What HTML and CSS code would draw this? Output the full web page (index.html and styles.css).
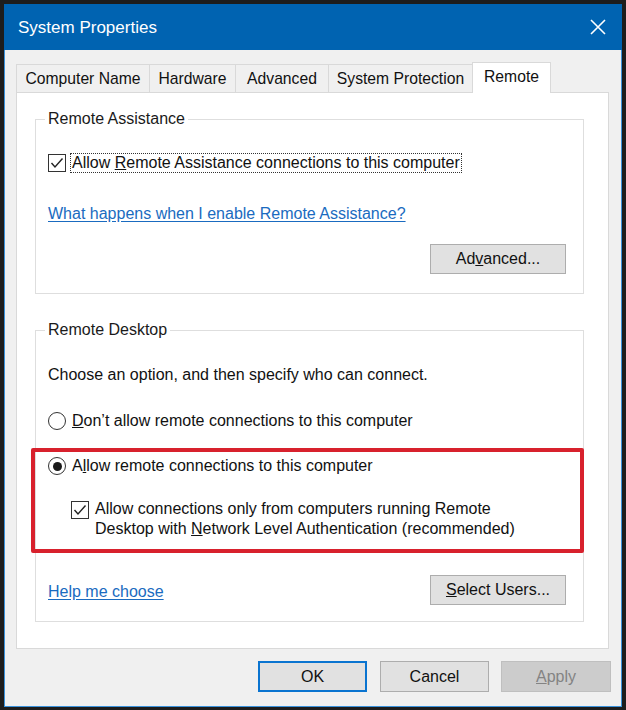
FILE: index.html
```html
<!DOCTYPE html>
<html>
<head>
<meta charset="utf-8">
<link rel="stylesheet" href="styles.css">
</head>
<body>
<div class="window">
  <div class="titlebar">
    <span class="title">System Properties</span>
    <svg class="close" width="16" height="16" viewBox="0 0 16 16"><path d="M1 1 L15 15 M15 1 L1 15" stroke="#fff" stroke-width="1.6" fill="none"/></svg>
  </div>
  <div class="body">
    <div class="tabs">
      <div class="tab tab-cn">Computer Name</div>
      <div class="tab tab-hw">Hardware</div>
      <div class="tab tab-adv">Advanced</div>
      <div class="tab tab-sp">System Protection</div>
      <div class="tab tab-rm active">Remote</div>
    </div>
    <div class="panel">
      <fieldset class="group group-ra">
        <legend>Remote Assistance</legend>
        <div class="row">
          <span class="checkbox"><svg width="18" height="18" viewBox="0 0 18 18"><polyline points="3.5,9 7,13 14.5,4.5" fill="none" stroke="#222" stroke-width="1.4"/></svg></span>
          <span class="label focus">Allow <u>R</u>emote Assistance connections to this computer</span>
        </div>
        <div class="row row-link">
          <a class="link">What happens when I enable Remote Assistance?</a>
        </div>
        <div class="btn-row">
          <button class="btn">Ad<u>v</u>anced...</button>
        </div>
      </fieldset>
      <fieldset class="group group-rd">
        <legend>Remote Desktop</legend>
        <div class="row">Choose an option, and then specify who can connect.</div>
        <div class="row row-radio1">
          <span class="radio"></span>
          <span class="label"><u>D</u>on’t allow remote connections to this computer</span>
        </div>
        <div class="highlight">
          <div class="row">
            <span class="radio checked"></span>
            <span class="label">A<u>l</u>low remote connections to this computer</span>
          </div>
          <div class="row row-nla">
            <span class="checkbox"><svg width="18" height="18" viewBox="0 0 18 18"><polyline points="3.5,9 7,13 14.5,4.5" fill="none" stroke="#222" stroke-width="1.4"/></svg></span>
            <span class="label">Allow connections only from computers running Remote<br>Desktop with <u>N</u>etwork Level Authentication (recommended)</span>
          </div>
        </div>
        <div class="help-row">
          <a class="link help-link">Help me choose</a>
          <button class="btn"><u>S</u>elect Users...</button>
        </div>
      </fieldset>
    </div>
    <div class="footer">
      <button class="btn fbtn ok">OK</button>
      <button class="btn fbtn cancel">Cancel</button>
      <button class="btn fbtn apply"><u>A</u>pply</button>
    </div>
  </div>
</div>
</body>
</html>
```

FILE: styles.css
```css
html, body {
  margin: 0;
  padding: 0;
  background: #1d1d1d;
}
body {
  width: 626px;
  height: 710px;
  overflow: hidden;
  font-family: "Liberation Sans", Arial, sans-serif;
  font-size: 16px;
  color: #111;
}
.window {
  box-sizing: border-box;
  margin: 4px 0 0 4px;
  width: 618px;
  height: 703px;
  background: #f0f0f0;
  border: 1px solid #3a92dc;
  border-top: none;
  display: flex;
  flex-direction: column;
}
.titlebar {
  height: 46px;
  margin: 0 -1px;
  background: #0063b1;
  display: flex;
  align-items: center;
  justify-content: space-between;
  padding: 0 16px 0 14px;
}
.title {
  color: #fff;
  font-size: 17px;
  margin-top: 1px;
}
.close {
  display: block;
  margin-top: -1px;
}
.body {
  flex: 1;
  display: flex;
  flex-direction: column;
}
.tabs {
  display: flex;
  align-items: flex-end;
  margin: 12px 0 0 11px;
}
.tab {
  box-sizing: border-box;
  height: 28px;
  border: 1px solid #d9d9d9;
  border-bottom: none;
  margin-right: -1px;
  background: #f0f0f0;
  text-align: center;
  line-height: 27px;
  white-space: nowrap;
  font-size: 15.7px;
}
.tab-cn { width: 134px; }
.tab-hw { width: 87px; }
.tab-adv { width: 94px; }
.tab-sp { width: 145px; }
.tab-rm { width: 79px; }
.tab.active {
  height: 31px;
  margin-bottom: -1px;
  background: #fff;
  line-height: 27px;
  position: relative;
  z-index: 1;
}
.panel {
  box-sizing: border-box;
  margin: 0 12px 0 11px;
  background: #fff;
  border: 1px solid #d9d9d9;
  padding: 16px 24px 26px 18px;
}
.group {
  margin: 0;
  border: 1px solid #dedede;
  padding: 0 12px 20px 12px;
  min-width: 0;
}
.group legend {
  padding: 0 3px;
  margin-left: -3px;
  line-height: 20px;
  color: #1a1a1a;
}
.group-ra {
  padding-top: 24px;
  padding-bottom: 19px;
}
.group-rd {
  margin-top: 26px;
  padding-top: 25px;
  padding-bottom: 16px;
}
.row {
  display: flex;
  align-items: center;
  line-height: 20px;
  min-height: 20px;
}
.row-link {
  margin-top: 31px;
}
.row-radio1 {
  margin-top: 26px;
}
.checkbox {
  box-sizing: border-box;
  width: 18px;
  height: 18px;
  border: 1px solid #333;
  background: #fff;
  flex: none;
}
.checkbox svg {
  display: block;
  margin: -1px;
}
.radio {
  box-sizing: border-box;
  width: 18px;
  height: 18px;
  border: 1px solid #333;
  border-radius: 50%;
  background: #fff;
  flex: none;
  display: flex;
  align-items: center;
  justify-content: center;
}
.radio.checked::after {
  content: "";
  width: 9px;
  height: 9px;
  border-radius: 50%;
  background: #1a1a1a;
}
.label {
  margin-left: 6px;
}
.focus {
  margin-left: 4px;
  padding: 0 2px;
  outline: 1px dotted #333;
  outline-offset: -1px;
}
.link {
  color: #1a6bc0;
  text-decoration: underline;
  text-underline-offset: 2px;
}
.help-link {
  margin-top: 4px;
}
.btn-row {
  display: flex;
  justify-content: flex-end;
  margin-top: 20px;
}
.btn {
  box-sizing: border-box;
  font-family: "Liberation Sans", Arial, sans-serif;
  font-size: 16px;
  color: #111;
  width: 136px;
  height: 30px;
  margin: 0 5px 0 0;
  padding: 0;
  background: #e1e1e1;
  border: 1px solid #adadad;
  border-radius: 0;
}
.highlight {
  margin: 17px -13px 0 -17px;
  border: 4px solid #d8212d;
  border-radius: 2px;
  padding: 4px 0 10px 13px;
}
.row-nla {
  margin-top: 23px;
  margin-left: 23px;
  align-items: flex-start;
}
.row-nla .checkbox {
  margin-top: 2px;
}
.help-row {
  display: flex;
  justify-content: space-between;
  align-items: center;
  margin-top: 22px;
}
.footer {
  display: flex;
  justify-content: flex-end;
  margin-top: 12px;
  padding-right: 10px;
}
.fbtn {
  width: 109px;
  height: 31px;
  margin: 0;
}
.ok {
  border: 2px solid #0a74d0;
}
.cancel {
  margin-left: 13px;
}
.apply {
  width: 110px;
  margin-left: 12px;
  background: #cccccc;
  border-color: #bfbfbf;
  color: #838383;
}
```
